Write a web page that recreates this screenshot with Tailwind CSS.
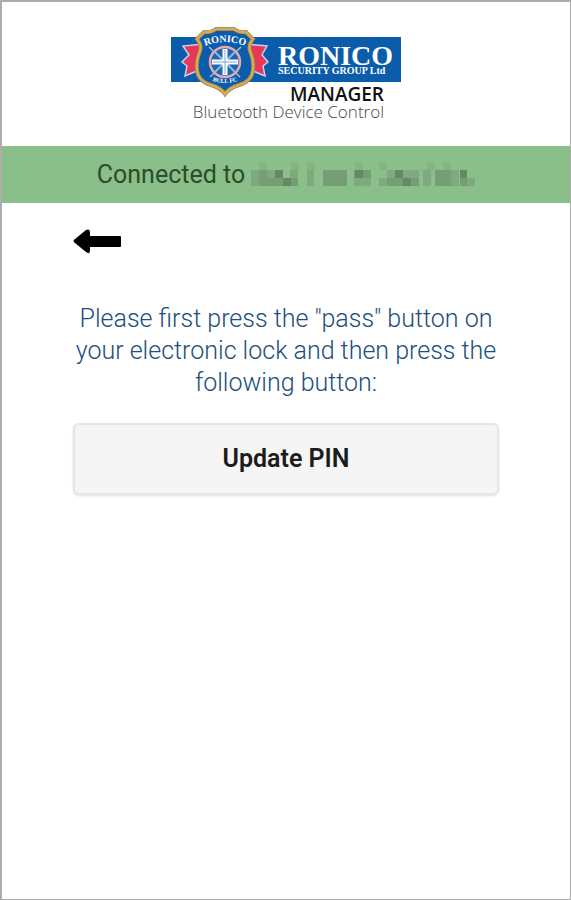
<!DOCTYPE html>
<html lang="en">
<head>
  <meta charset="UTF-8" />
  <title>Ronico Manager</title>
  <meta name="viewport" content="width=device-width, initial-scale=1" />
  <script src="https://cdn.jsdelivr.net/npm/@tailwindcss/browser@4"></script>
</head>
<body class="min-h-screen flex flex-col bg-white border-2 border-r-1 border-b-1 border-[#acacac] font-[Roboto,sans-serif]">
  <header class="flex justify-center pt-6 pb-5">
    <svg class="w-[232px] h-[100px]" viewBox="170 26 232 100" role="img" aria-label="Ronico Manager logo">
      <rect x="171" y="37" width="230" height="45" fill="#0b5cab" />
      <!-- ribbons -->
      <path d="M203 44 L183 46 L189 55 L182 62 L187 66 L185 76 L204 68 Z" fill="#e9375b" stroke="#c3d3ee" stroke-width="1.5" />
      <path d="M247 44 L267 46 L262 55 L268 62 L263 66 L265 76 L246 68 Z" fill="#e9375b" stroke="#c3d3ee" stroke-width="1.5" />
      <!-- shield -->
      <path d="M216 29 H234 Q239 33 246 32 L253 39 Q248 45 250 51 Q254 60 253 70 Q252 81 239 85 Q229 88 225 94 Q221 88 211 85 Q198 81 197 70 Q196 60 200 51 Q202 45 197 39 L204 32 Q211 33 216 29 Z" fill="#0b5cab" stroke="#8c8660" stroke-width="4" />
      <path d="M216 29 H234 Q239 33 246 32 L253 39 Q248 45 250 51 Q254 60 253 70 Q252 81 239 85 Q229 88 225 94 Q221 88 211 85 Q198 81 197 70 Q196 60 200 51 Q202 45 197 39 L204 32 Q211 33 216 29 Z" fill="none" stroke="#dca94f" stroke-width="2.5" />
      <path id="crestTop" d="M202 47 Q225 37 248 47" fill="none" />
      <path id="crestBottom" d="M207 79 Q225 87 243 79" fill="none" />
      <path d="M209 47 L240 77 M241 47 L210 77" stroke="#9fc0e4" stroke-width="1.5" />
      <circle cx="225" cy="62" r="15" fill="#1c67b0" stroke="#e8a9ae" stroke-width="2.5" />
      <path d="M215 52 L235 72 M235 52 L215 72" stroke="#8db7df" stroke-width="2" />
      <path d="M225 49 V75 M212 62 H238" stroke="#fff" stroke-width="5" />
      <path d="M225 50 V74 M213 62 H237" stroke="#7ea9d4" stroke-width="1" />
      <text fill="#fff" font-family="Liberation Serif, serif" font-weight="700" font-size="10" text-anchor="middle"><textPath href="#crestTop" startOffset="50%">RONICO</textPath></text>
      <text fill="#fff" font-family="Liberation Serif, serif" font-weight="700" font-size="6" text-anchor="middle"><textPath href="#crestBottom" startOffset="50%">BULL FC</textPath></text>
      <text x="278" y="65" fill="#fff" font-family="Liberation Serif, serif" font-weight="700" font-size="28">RONICO</text>
      <text x="278" y="74" fill="#fff" font-family="Liberation Serif, serif" font-weight="700" font-size="10">SECURITY GROUP Ltd</text>
      <text x="384" y="101" text-anchor="end" fill="#111" font-family="Open Sans, sans-serif" font-weight="600" font-size="19">MANAGER</text>
      <text x="384" y="118" text-anchor="end" fill="#444" font-family="Open Sans, sans-serif" font-weight="300" font-size="17">Bluetooth Device Control</text>
    </svg>
  </header>

  <div class="flex items-center justify-center gap-[6px] h-[57px] bg-[#8abf89] text-[#2b4d2b] text-[25px]">
    <p>Connected to</p>
    <!-- masked device name -->
    <svg class="w-[224px] h-6" viewBox="252 159 224 24" role="img" aria-label="Hidden device name" shape-rendering="crispEdges">
      <path fill="#84b583" d="M260 158h8v8h-8zM292 158h8v8h-8zM308 158h8v8h-8zM356 158h8v8h-8zM380 158h8v8h-8zM428 158h8v8h-8zM444 158h8v8h-8z" />
      <path fill="#7fa97f" d="M252 166h8v16h-8zM268 166h8v8h-8zM291 166h8v8h-8zM308 166h7v16h-7zM355 174h17v8h-17zM380 174h8v8h-8zM388 166h8v8h-8zM404 166h16v8h-16zM424 166h8v16h-8zM452 166h8v16h-8zM468 174h8v8h-8z" />
      <path fill="#759e75" d="M260 166h8v16h-8zM268 174h16v8h-16zM291 174h8v8h-8zM324 166h24v16h-24zM355 166h1v8h-1zM364 166h8v8h-8zM388 174h16v8h-16zM412 174h8v8h-8zM436 166h16v16h-16zM461 174h7v8h-7z" />
      <path fill="#638a64" d="M276 166h8v8h-8zM284 174h8v8h-8zM356 166h8v8h-8zM396 166h8v8h-8zM404 174h8v8h-8zM461 166h7v8h-7z" />
    </svg>
  </div>

  <main class="px-[71px] pt-6">
    <button type="button" aria-label="Back" class="block">
      <svg class="w-12 h-7" viewBox="0 0 48 28" fill="#000">
        <path d="M2 12 L13 3 Q17 1 17 6 V9 H47 Q48 9 48 10 V19 Q48 20 47 20 H17 V23 Q17 28 13 25 L2 16 Q-1 14 2 12 Z" />
      </svg>
    </button>
    <p class="mt-12 text-center text-[25px] leading-8 font-light text-[#204e7c]">Please first press the "pass" button on your electronic lock and then press the following button:</p>
    <button type="button" class="mt-6 w-full h-[72px] rounded-md border-2 border-[#e6e6e6] bg-[#f5f5f5] shadow-sm text-[25px] font-semibold text-[#1c1c1c]">Update PIN</button>
  </main>
</body>
</html>
